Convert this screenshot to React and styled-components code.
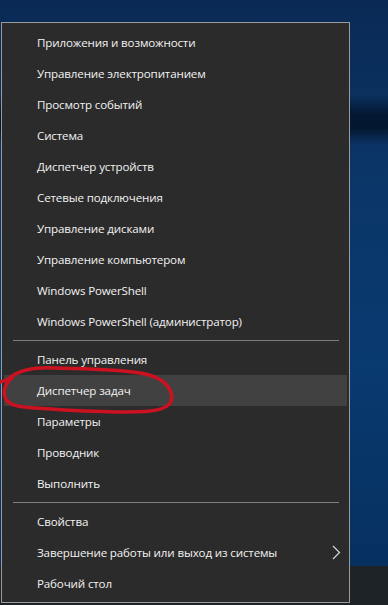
import React from "react";
import styled, { createGlobalStyle } from "styled-components";

const GlobalStyle = createGlobalStyle`
  html, body {
    margin: 0;
    padding: 0;
    background: #0a2f5e;
  }
`;

const Desktop = styled.div`
  position: relative;
  width: 388px;
  height: 605px;
  overflow: hidden;
  padding: 22px 0 0 1px;
  box-sizing: border-box;
  background:
    linear-gradient(180deg, transparent 0, transparent 566px, #1e2328 566px),
    linear-gradient(180deg, transparent 95px, rgba(2, 14, 32, 0.75) 115px, rgba(2, 14, 32, 0.75) 128px, transparent 145px),
    linear-gradient(180deg, #0a2a55 0%, #0b3668 30%, #093a70 60%, #06305f 93%);
  font-family: "Open Sans", "Noto Sans", "Liberation Sans", sans-serif;
`;

const Menu = styled.div`
  width: 349px;
  box-sizing: border-box;
  background: #2b2b2b;
  border: 1px solid #9a9a9a;
  padding: 4px 1px 3px;
`;

const Item = styled.div`
  height: 31px;
  display: flex;
  align-items: center;
  justify-content: space-between;
  margin: 0 1px;
  padding: 0 6px 0 33px;
  font-size: 11.6px;
  letter-spacing: -0.15px;
  color: #f2f2f2;
  background: ${(p) => (p.$active ? "#414141" : "transparent")};
  white-space: nowrap;
`;

const Separator = styled.div`
  height: 7px;
  display: flex;
  align-items: center;
  padding: 0 9px 0 10px;

  &::after {
    content: "";
    flex: 1;
    height: 1px;
    background: #7d7d7d;
  }
`;

const Chevron = () => (
  <svg width="9" height="15" viewBox="0 0 9 15" aria-hidden="true">
    <polyline points="1,1 7.5,7.5 1,14" fill="none" stroke="#d8d8d8" strokeWidth="1.2" />
  </svg>
);

const Scribble = styled.svg`
  position: absolute;
  left: 0;
  top: 362px;
  pointer-events: none;
`;

const groups = [
  [
    "Приложения и возможности",
    "Управление электропитанием",
    "Просмотр событий",
    "Система",
    "Диспетчер устройств",
    "Сетевые подключения",
    "Управление дисками",
    "Управление компьютером",
    "Windows PowerShell",
    "Windows PowerShell (администратор)",
  ],
  ["Панель управления", "Диспетчер задач", "Параметры", "Проводник", "Выполнить"],
  ["Свойства", "Завершение работы или выход из системы", "Рабочий стол"],
];

export default function App() {
  return (
    <>
      <GlobalStyle />
      <Desktop>
        <Menu>
          {groups.map((group, gi) => (
            <React.Fragment key={gi}>
              {gi > 0 && <Separator />}
              {group.map((label) => (
                <Item key={label} $active={label === "Диспетчер задач"}>
                  <span>{label}</span>
                  {label.startsWith("Завершение") && <Chevron />}
                </Item>
              ))}
            </React.Fragment>
          ))}
        </Menu>
        <Scribble width="180" height="56" viewBox="0 362 180 56">
          <path
            d="M0 382 C4 381 8 380 11 377 C20 370 35 367 55 368 C85 369 115 369 140 373 C158 376 168 383 171 393 C174 403 168 409 150 411 C115 414 70 410 35 408 C18 407 7 405 5 397 C3 390 6 383 12 378"
            fill="none"
            stroke="#cc1220"
            strokeWidth="3.5"
            strokeLinecap="round"
            strokeLinejoin="round"
          />
        </Scribble>
      </Desktop>
    </>
  );
}
